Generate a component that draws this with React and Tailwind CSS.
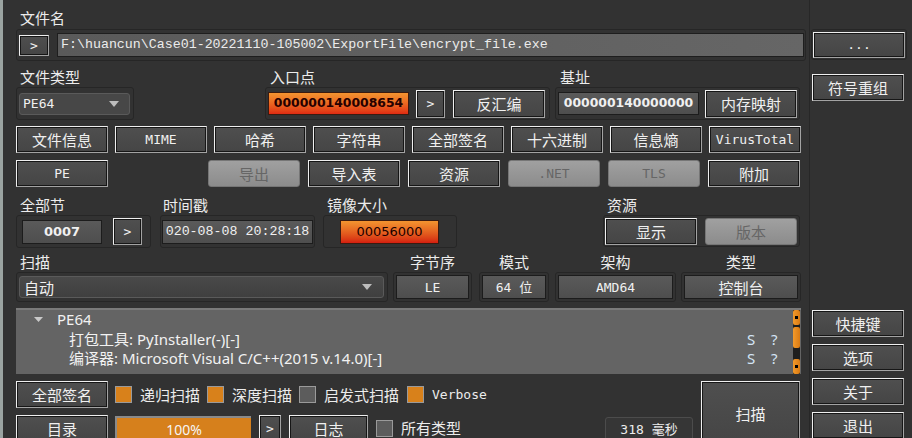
import React from "react";
import clsx from "clsx";

const cjk = "font-['Noto_Sans_CJK_SC',sans-serif]";
const mono = "font-['Liberation_Mono','Noto_Sans_CJK_SC',monospace]";
const btnMono = "font-['DejaVu_Sans_Mono','Noto_Sans_CJK_SC',monospace]";
const num = "font-['DejaVu_Sans',sans-serif]";
const ui = "font-['Noto_Sans','Noto_Sans_CJK_SC',sans-serif]";

const Btn = ({ children, className = "", isMono = false }) => (
  <div
    className={clsx(
      "flex items-center justify-center shrink-0 border border-t-[#efefef] border-l-[#efefef] border-r-[#a3a3a3] border-b-[#a3a3a3] bg-linear-to-b from-[#4f4f4f] to-[#454545] text-[#f0f0f0] shadow-[inset_1px_1px_0_#161616,inset_-1px_-1px_0_#161616] leading-none",
      isMono ? clsx(btnMono, "text-[13px]") : clsx(cjk, "text-[15px]"),
      className
    )}
  >
    {children}
  </div>
);

const Disabled = ({ children, className = "", isMono = false }) => (
  <div
    className={clsx(
      "flex items-center justify-center shrink-0 rounded-[3px] border border-[#767676] bg-linear-to-b from-[#a0a0a0] to-[#8c8c8c] text-[#666] leading-none",
      isMono ? clsx(btnMono, "text-[13px]") : clsx(cjk, "text-[15px]"),
      className
    )}
  >
    {children}
  </div>
);

const Group = ({ children, className = "" }) => (
  <div className={clsx("flex items-center shrink-0 rounded-[3px] border border-[#262626]", className)}>
    {children}
  </div>
);

const Label = ({ children, className = "" }) => (
  <div className={clsx(cjk, "h-[20px] text-[15px] leading-[20px] text-[#ececec]", className)}>{children}</div>
);

const Arrow = () => (
  <svg width="10" height="6" viewBox="0 0 10 6">
    <path d="M0 0h10L5 6z" fill="#bdbdbd" />
  </svg>
);

const Field = ({ children, className = "" }) => (
  <div
    className={clsx(
      "flex items-center justify-center shrink-0 border border-[#1c1c1c] bg-linear-to-b from-[#5a5a5a] to-[#4e4e4e] text-[#f0f0f0] leading-none",
      className
    )}
  >
    {children}
  </div>
);

const Check = ({ on }) => (
  <div
    className={clsx(
      "w-[17px] h-[17px] shrink-0 border border-[#9a9a9a]",
      on ? "bg-[#d8811b]" : "bg-[#5c5c5c]"
    )}
  />
);

const ScrollCap = () => (
  <div className="h-[15px] w-[7px] rounded-[2px] bg-linear-to-r from-[#f39a2a] to-[#d97a12] flex items-center justify-center">
    <div className="w-[3px] h-[3px] bg-black" />
  </div>
);

export default function App() {
  return (
    <div className="w-[912px] h-[438px] overflow-hidden bg-[#323232] flex">
      <div className="w-[3px] shrink-0 bg-[#9aa3a1]" />

      {/* main panel */}
      <div className="w-[806px] shrink-0 pl-[13px]">
        <Label className="mt-[8px] pl-[4px]">文件名</Label>
        <Group className="mt-[1px] w-[790px] h-[32px]">
          <Btn className="ml-[2px] w-[30px] h-[21px]" isMono>
            &gt;
          </Btn>
          <div
            className={clsx(
              mono,
              "ml-[8px] w-[747px] h-[24px] border border-[#1e1e1e] bg-linear-to-r from-[#5a5a5a] to-[#666666] text-[13.3px] leading-[22px] text-[#ececec] pl-[3px] whitespace-nowrap overflow-hidden"
            )}
          >
            F:\huancun\Case01-20221110-105002\ExportFile\encrypt_file.exe
          </div>
        </Group>

        {/* type / entry / base */}
        <div className="flex mt-[6px]">
          <div className="w-[118px] shrink-0">
            <Label className="pl-[4px]">文件类型</Label>
            <Group className="w-[118px] h-[33px]">
              <div className="ml-[2px] w-[111px] h-[22px] rounded-[3px] border border-[#5a5a5a] bg-[#474747] flex items-center justify-between pl-[3px] pr-[10px]">
                <span className={clsx(btnMono, "text-[13px] text-[#f0f0f0]")}>PE64</span>
                <Arrow />
              </div>
            </Group>
          </div>
          <div className="ml-[131px] w-[285px] shrink-0">
            <Label className="pl-[5px]">入口点</Label>
            <Group className="w-[285px] h-[33px]">
              <div className={clsx(num, "ml-[2px] w-[141px] h-[23px] border border-[#3a1a10] bg-linear-to-b from-[#f39430] to-[#df2a12] flex items-center justify-center overflow-hidden whitespace-nowrap text-[12.4px] font-bold text-[#250000]")}>
                000000140008654
              </div>
              <Btn className="ml-[7px] w-[29px] h-[28px]" isMono>
                &gt;
              </Btn>
              <Btn className="ml-[8px] w-[92px] h-[28px]">反汇编</Btn>
            </Group>
          </div>
          <div className="ml-[5px] w-[245px] shrink-0">
            <Label className="pl-[5px]">基址</Label>
            <Group className="w-[245px] h-[33px]">
              <Field className={clsx(num, "ml-[2px] w-[141px] h-[23px] text-[12.4px] font-bold overflow-hidden whitespace-nowrap")}>000000140000000</Field>
              <Btn className="ml-[6px] w-[92px] h-[28px]">内存映射</Btn>
            </Group>
          </div>
        </div>

        {/* button rows */}
        <div className="flex gap-[7px] mt-[6px]">
          <Btn className="w-[92px] h-[27px]">文件信息</Btn>
          <Btn className="w-[92px] h-[27px]" isMono>MIME</Btn>
          <Btn className="w-[92px] h-[27px]">哈希</Btn>
          <Btn className="w-[92px] h-[27px]">字符串</Btn>
          <Btn className="w-[92px] h-[27px]">全部签名</Btn>
          <Btn className="w-[92px] h-[27px]">十六进制</Btn>
          <Btn className="w-[92px] h-[27px]">信息熵</Btn>
          <Btn className="w-[92px] h-[27px]" isMono>VirusTotal</Btn>
        </div>
        <div className="flex gap-[8px] mt-[7px]">
          <Btn className="w-[92px] h-[27px] mr-[92px]" isMono>PE</Btn>
          <Disabled className="w-[92px] h-[27px]">导出</Disabled>
          <Btn className="w-[92px] h-[27px]">导入表</Btn>
          <Btn className="w-[92px] h-[27px]">资源</Btn>
          <Disabled className="w-[92px] h-[27px]" isMono>.NET</Disabled>
          <Disabled className="w-[92px] h-[27px]" isMono>TLS</Disabled>
          <Btn className="w-[92px] h-[27px]">附加</Btn>
        </div>

        {/* sections / time / size / resources */}
        <div className="flex mt-[8px]">
          <div className="w-[135px] shrink-0">
            <Label className="pl-[4px]">全部节</Label>
            <Group className="w-[135px] h-[33px]">
              <Field className={clsx(num, "ml-[5px] w-[80px] h-[24px] text-[13px] font-bold")}>0007</Field>
              <Btn className="ml-[11px] w-[29px] h-[27px]" isMono>
                &gt;
              </Btn>
            </Group>
          </div>
          <div className="ml-[9px] w-[155px] shrink-0">
            <Label className="pl-[3px]">时间戳</Label>
            <Group className="w-[155px] h-[33px]">
              <Field className={clsx(mono, "ml-[1px] w-[151px] h-[24px] text-[13.3px] overflow-hidden whitespace-nowrap")}>020-08-08 20:28:18</Field>
            </Group>
          </div>
          <div className="ml-[8px] w-[134px] shrink-0">
            <Label className="pl-[4px]">镜像大小</Label>
            <Group className="w-[134px] h-[33px]">
              <div className={clsx(num, "ml-[16px] w-[99px] h-[24px] border border-[#3a1a10] bg-linear-to-b from-[#f39430] to-[#d41c10] flex items-center justify-center text-[13px] text-[#1a0000]")}>
                00056000
              </div>
            </Group>
          </div>
          <div className="ml-[146px] w-[197px] shrink-0">
            <Label className="pl-[4px]">资源</Label>
            <Group className="w-[197px] h-[32px]">
              <Btn className="ml-[1px] w-[92px] h-[27px]">显示</Btn>
              <Disabled className="ml-[8px] w-[92px] h-[27px]">版本</Disabled>
            </Group>
          </div>
        </div>

        {/* scan row */}
        <div className="flex mt-[4px]">
          <div className="w-[372px] shrink-0">
            <Label className="pl-[4px]">扫描</Label>
            <Group className="w-[372px] h-[30px]">
              <div className="ml-[2px] w-[365px] h-[22px] rounded-[3px] border border-[#5a5a5a] bg-linear-to-b from-[#494949] to-[#3f3f3f] flex items-center justify-between pl-[4px] pr-[11px]">
                <span className={clsx(cjk, "text-[15px] leading-none text-[#f0f0f0]")}>自动</span>
                <Arrow />
              </div>
            </Group>
          </div>
          {[
            ["字节序", "LE", "ml-[5px] w-[79px]", "w-[73px]", true],
            ["模式", "64 位", "ml-[7px] w-[70px]", "w-[64px]", true],
            ["架构", "AMD64", "ml-[6px] w-[121px]", "w-[115px]", true],
            ["类型", "控制台", "ml-[5px] w-[120px]", "w-[114px]", false],
          ].map(([label, value, col, w, isMono]) => (
            <div key={label} className={clsx("shrink-0", col)}>
              <Label className="text-center">{label}</Label>
              <Group className="w-full h-[30px] justify-center">
                <Field className={clsx(w, "h-[24px]", isMono ? clsx(btnMono, "text-[13px]") : clsx(cjk, "text-[15px]"))}>{value}</Field>
              </Group>
            </div>
          ))}
        </div>

        {/* result tree */}
        <div className="mt-[6px] w-[785px] h-[66px] bg-[#646464] border-t-2 border-[#7a7a7a] flex">
          <div className={clsx(ui, "flex-1 text-[15px] leading-[19.5px] text-[#f2f2f2]")}>
            <div className="flex items-center">
              <div className="w-[28px] flex justify-end pr-[1px]">
                <svg width="9" height="5" viewBox="0 0 9 5">
                  <path d="M0 0h9L4.5 5z" fill="#c9c9c9" />
                </svg>
              </div>
              <span className="ml-[13px]">PE64</span>
            </div>
            <div className="flex pl-[53px]">
              <span className="flex-1">打包工具: PyInstaller(-)[-]</span>
              <span className="w-[24px] text-[#d4e4f5]">S</span>
              <span className="w-[22px] text-[#d4e4f5]">?</span>
            </div>
            <div className="flex pl-[53px]">
              <span className="flex-1">编译器: Microsoft Visual C/C++(2015 v.14.0)[-]</span>
              <span className="w-[24px] text-[#d4e4f5]">S</span>
              <span className="w-[22px] text-[#d4e4f5]">?</span>
            </div>
          </div>
          <div className="w-[7px] mr-[1px] bg-[#1e1e1e] flex flex-col">
            <ScrollCap />
            <div className="mt-[2px] h-[21px] rounded-[2px] bg-linear-to-r from-[#f39a2a] to-[#d97a12]" />
            <div className="flex-1" />
            <ScrollCap />
          </div>
        </div>

        {/* bottom */}
        <div className="flex mt-[7px]">
          <div className="w-[677px] shrink-0">
            <div className="flex items-center h-[27px]">
              <Btn className="w-[92px] h-[27px]">全部签名</Btn>
              <div className={clsx(cjk, "flex items-center text-[15px] text-[#ececec] leading-none")}>
                <div className="ml-[7px]"><Check on /></div>
                <span className="ml-[8px]">递归扫描</span>
                <div className="ml-[7px]"><Check on /></div>
                <span className="ml-[8px]">深度扫描</span>
                <div className="ml-[7px]"><Check /></div>
                <span className="ml-[8px]">启发式扫描</span>
                <div className="ml-[8px]"><Check on /></div>
                <span className={clsx(btnMono, "ml-[8px] text-[13px]")}>Verbose</span>
              </div>
            </div>
            <div className="flex items-start mt-[7px]">
              <Btn className="w-[92px] h-[27px]">目录</Btn>
              <div className={clsx(ui, "shrink-0 ml-[7px] mt-[1px] w-[136px] h-[24px] bg-[#d6801c] border-t-2 border-l-2 border-[#8a8a8a] flex items-center justify-center text-[14px] text-[#f5f5f5]")}>
                100%
              </div>
              <Btn className="ml-[8px] w-[22px] h-[26px]" isMono>
                &gt;
              </Btn>
              <Btn className="ml-[8px] w-[79px] h-[27px]">日志</Btn>
              <div className="ml-[8px] mt-[5px]"><Check /></div>
              <span className={clsx(cjk, "shrink-0 ml-[8px] mt-[4px] text-[15px] leading-[18px] text-[#ececec]")}>所有类型</span>
              <div className={clsx(btnMono, "shrink-0 ml-auto mt-[2px] w-[88px] h-[26px] rounded-t-[3px] border border-[#4c4c4c] bg-[#363636] flex items-center justify-center text-[13px] text-[#ececec]")}>
                318 毫秒
              </div>
            </div>
          </div>
          <Btn className="ml-[8px] w-[99px] h-[64px]">扫描</Btn>
        </div>
      </div>

      {/* right column */}
      <div className="w-[103px] shrink-0 border-l border-[#272727] pl-[1px]">
        <div className="mt-[29px] w-[96px] h-[31px] rounded-[3px] border border-[#262626] flex items-center pl-[1px]">
          <Btn className="w-[92px] h-[26px]" isMono>...</Btn>
        </div>
        <Btn className="mt-[14px] ml-[1px] w-[92px] h-[27px]">符号重组</Btn>
        <div className="mt-[209px] ml-[1px] flex flex-col gap-[7px]">
          <Btn className="w-[92px] h-[27px]">快捷键</Btn>
          <Btn className="w-[92px] h-[27px]">选项</Btn>
          <Btn className="w-[92px] h-[27px]">关于</Btn>
          <Btn className="w-[92px] h-[27px]">退出</Btn>
        </div>
      </div>
    </div>
  );
}
